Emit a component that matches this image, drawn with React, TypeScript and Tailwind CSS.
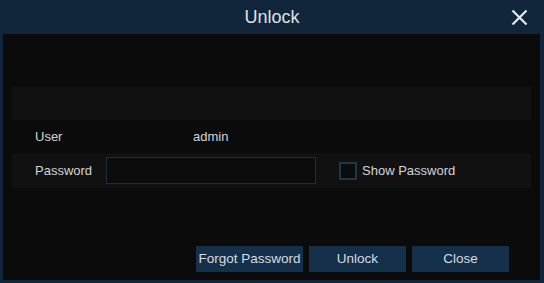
export default function App() {
  return (
    <div
      className="w-[544px] h-[283px] bg-[#12263b] flex flex-col text-[#d2d6da]"
      style={{ fontFamily: '"Liberation Sans", Arial, sans-serif' }}
    >
      <div className="h-[34px] relative flex items-center justify-center shrink-0">
        <span className="text-[18px] text-[#dfe3e7]">Unlock</span>
        <svg className="absolute right-[16px] top-[9px]" width="17" height="17" viewBox="0 0 17 17">
          <path d="M1.5 1.5 L15.5 15.5 M15.5 1.5 L1.5 15.5" stroke="#e4e8ec" strokeWidth="2.2" />
        </svg>
      </div>

      <div className="flex-1 ml-[3px] mr-[4px] mb-[3px] bg-[#0b0b0b] px-[9px] pt-[53px] flex flex-col">
        <div className="h-[33px] bg-[#111111]" />

        <div className="h-[33px] flex items-center text-[13px]">
          <span className="pl-[23px] w-[181px]">User</span>
          <span>admin</span>
        </div>

        <div className="h-[35px] bg-[#111111] flex items-center text-[13px]">
          <span className="pl-[23px] w-[94px]">Password</span>
          <div className="w-[210px] h-[27px] border border-[#1b2f44] bg-[#0c0c0c]" />
          <div className="ml-[23px] w-[18px] h-[18px] border-2 border-[#22364a] bg-[#0c0c0c]" />
          <span className="ml-[5px]">Show Password</span>
        </div>

        <div className="flex justify-end gap-[6px] mt-[58px] pr-[22px] text-[13.5px]">
          <button className="w-[107px] h-[26px] bg-[#15304a] text-[#d8dce0]">Forgot Password</button>
          <button className="w-[97px] h-[26px] bg-[#15304a] text-[#d8dce0]">Unlock</button>
          <button className="w-[97px] h-[26px] bg-[#15304a] text-[#d8dce0]">Close</button>
        </div>
      </div>
    </div>
  );
}
